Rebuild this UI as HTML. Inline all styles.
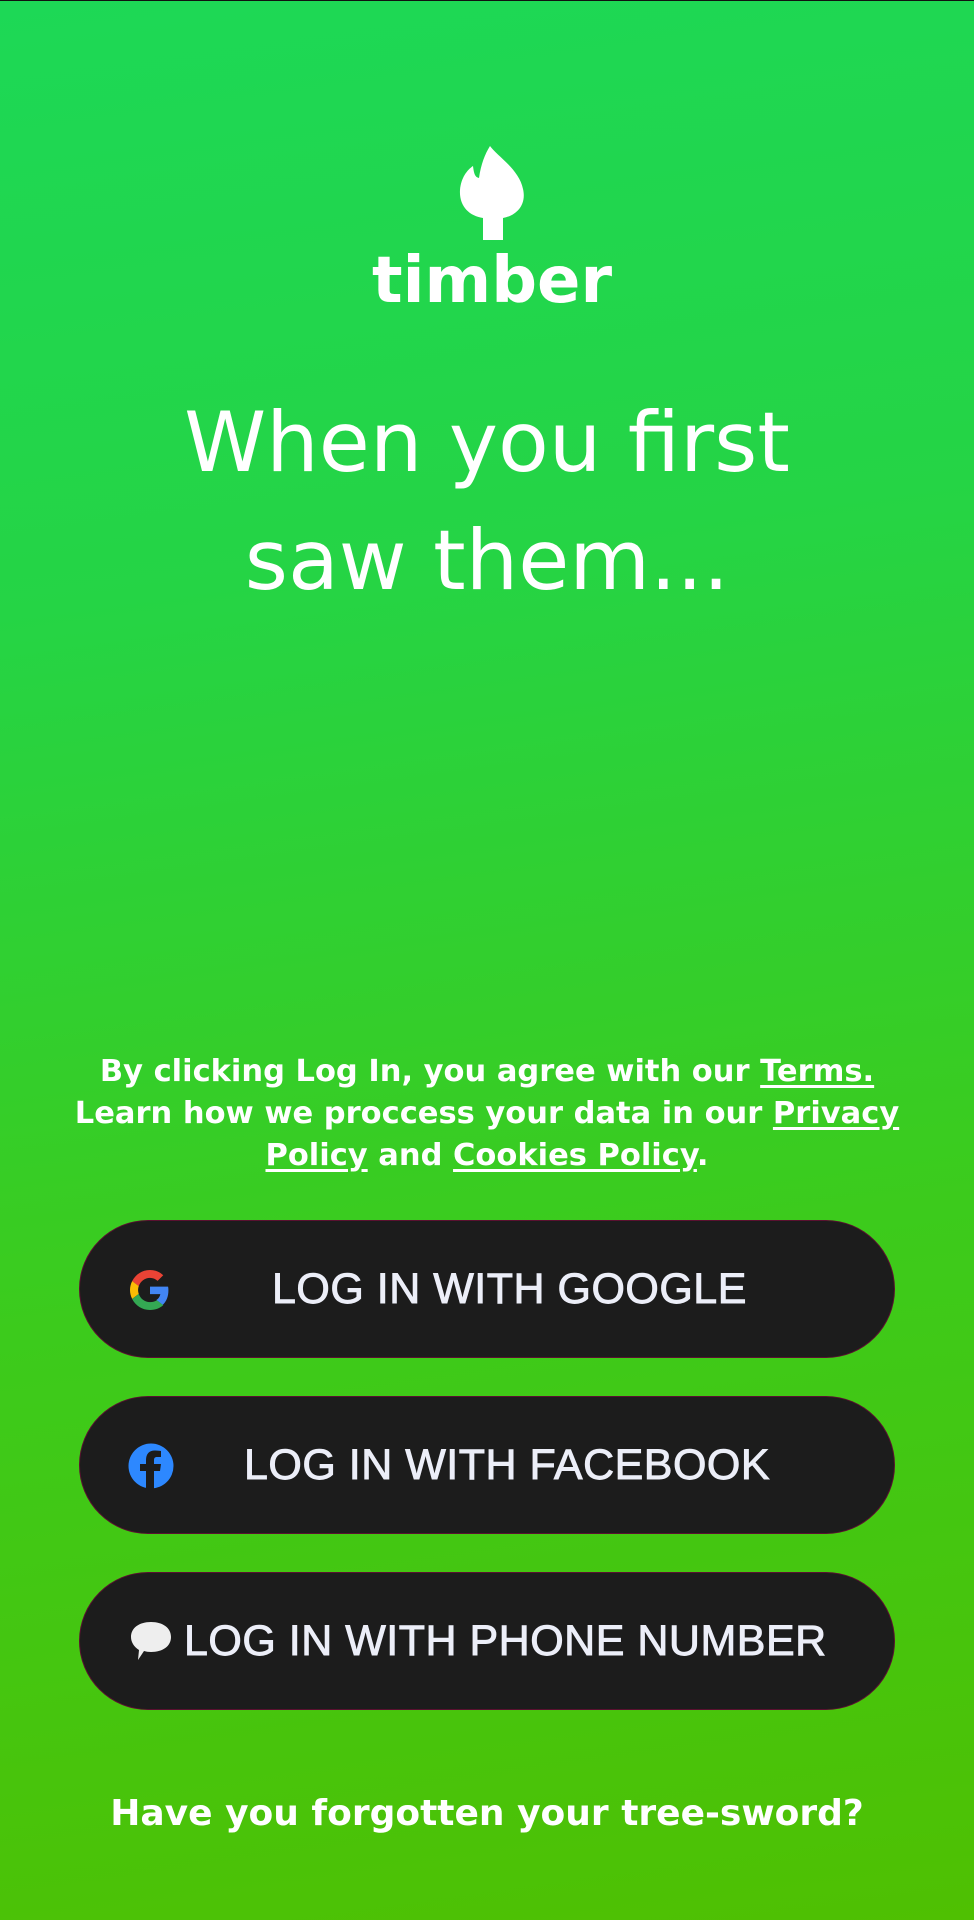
<!DOCTYPE html>
<html><head><meta charset="utf-8"><style>
html,body{margin:0;padding:0}
body{width:974px;height:1920px;overflow:hidden;position:relative;background:linear-gradient(172deg,#1dd856 0%,#25d445 30%,#3ccb1c 65%,#4fc002 100%);border-top:1px solid #111;box-sizing:border-box;font-family:"Liberation Sans",sans-serif;color:#fff}
.abs{position:absolute}
.head{left:0;width:974px;text-align:center;font-family:"DejaVu Sans",sans-serif;font-size:83px;line-height:1}
.terms{left:20px;width:934px;top:1050px;text-align:center;font-family:"DejaVu Sans",sans-serif;font-weight:bold;font-size:30.5px;line-height:42px}
.terms u{text-underline-offset:4px}
.btn{left:80px;width:814px;height:136px;border-radius:68px;background:#1c1c1c;box-shadow:0 0 0 1px #5a1030}
.btn span{position:absolute;top:0;line-height:136px;font-size:43px;color:#eceef8;letter-spacing:0.5px;white-space:nowrap;-webkit-text-stroke:0.9px #eceef8}
.forgot{left:0;width:974px;top:1792px;text-align:center;font-family:"DejaVu Sans",sans-serif;font-weight:bold;font-size:36px}
</style></head><body>
<svg class="abs" style="left:456px;top:143px" width="74" height="98" viewBox="0 0 72 98">
<path d="M33 2 C40 12 62 25 66 45 C70 62 58 72 46 74 L46 96 L26 96 L26 74 C12 72 2 62 3 46 C4 34 10 26 16 22 C17 30 18 33 22 34 C24 20 28 10 33 2 Z" fill="#fff"/>
</svg>
<div class="abs" style="left:370px;top:244px;width:244px;text-align:center;font-family:'DejaVu Sans',sans-serif;font-weight:bold;font-size:64px;line-height:72px">timber</div>
<div class="abs head" style="top:400px">When you first</div>
<div class="abs head" style="top:518px">saw them...</div>
<div class="abs terms">By clicking Log In, you agree with our <u>Terms.</u><br>Learn how we proccess your data in our <u>Privacy</u><br><u>Policy</u> and <u>Cookies Policy</u>.</div>
<div class="abs btn" style="top:1220px">
<svg class="abs" style="left:50px;top:49px" width="40" height="40" viewBox="0 0 48 48"><path fill="#EA4335" d="M24 9.5c3.5 0 6.6 1.2 9.1 3.6l6.8-6.8C35.8 2.4 30.2 0 24 0 14.6 0 6.6 5.4 2.6 13.3l7.9 6.2C12.4 13.7 17.7 9.5 24 9.5z"/><path fill="#4285F4" d="M46.1 24.5c0-1.6-.1-3.1-.4-4.5H24v9h12.4c-.5 2.9-2.2 5.4-4.7 7l7.6 5.9c4.4-4.1 6.8-10.1 6.8-17.4z"/><path fill="#FBBC05" d="M10.5 28.6c-.5-1.4-.8-3-.8-4.6s.3-3.2.8-4.6l-7.9-6.1C1 16.5 0 20.1 0 24s1 7.5 2.6 10.7l7.9-6.1z"/><path fill="#34A853" d="M24 48c6.5 0 11.9-2.1 15.9-5.8l-7.6-5.9c-2.1 1.4-4.9 2.3-8.3 2.3-6.3 0-11.6-4.2-13.5-9.9l-7.9 6.1C6.6 42.6 14.6 48 24 48z"/></svg>
<span style="left:192px">LOG IN WITH GOOGLE</span></div>
<div class="abs btn" style="top:1396px">
<svg class="abs" style="left:48px;top:46px" width="46" height="46" viewBox="0 0 46 46"><circle cx="23" cy="23" r="22.5" fill="#2d88ff"/><path d="M26 46 V28 h6 l1-7 h-7 v-4 c0-2 1-3 3-3 h4 V8 c-1 0-3-.5-6-.5 -6 0-9 3.5-9 9.5 v4 h-6 v7 h6 V46 z" fill="#1c1c1c"/></svg>
<span style="left:164px">LOG IN WITH FACEBOOK</span></div>
<div class="abs btn" style="top:1572px">
<svg class="abs" style="left:50px;top:47px" width="42" height="42" viewBox="0 0 42 42"><path d="M21 2 C33 2 41 8 41 17 C41 26 33 32 21 32 C18 32 16 31.6 14 31 L8 40 L9 30 C4 27 1 22 1 17 C1 8 9 2 21 2 Z" fill="#eee"/></svg>
<span style="left:104px">LOG IN WITH PHONE NUMBER</span></div>
<div class="abs forgot">Have you forgotten your tree-sword?</div>
</body></html>
